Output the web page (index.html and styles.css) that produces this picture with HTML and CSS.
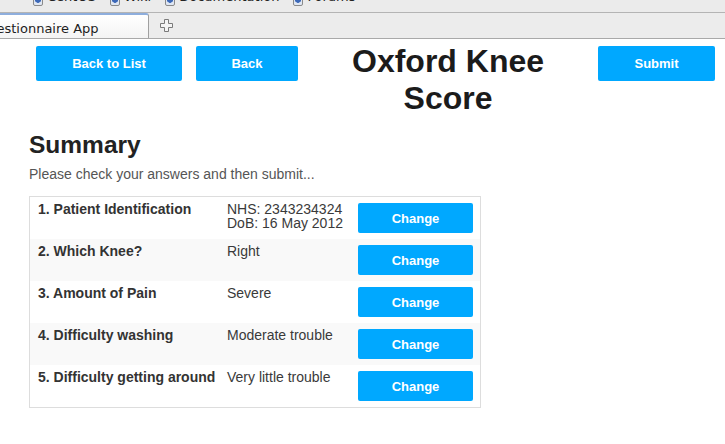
FILE: index.html
```html
<!DOCTYPE html>
<html lang="en">
<head>
<meta charset="utf-8">
<title>Questionnaire App</title>
<link rel="stylesheet" href="styles.css">
</head>
<body>
<div class="chrome">
  <nav class="bookmarks">
    <span class="bm bm-first">Most Visited</span>
    <span class="bm"><span class="bm-icon"></span>CentOS</span>
    <span class="bm"><span class="bm-icon"></span>Wiki</span>
    <span class="bm"><span class="bm-icon"></span>Documentation</span>
    <span class="bm"><span class="bm-icon"></span>Forums</span>
  </nav>
  <div class="tabs">
    <div class="tab"><span class="tab-title">Questionnaire App</span></div>
    <div class="newtab">
      <svg width="13" height="13" viewBox="0 0 13 13"><path d="M4.5 0.5h4v4h4v4h-4v4h-4v-4h-4v-4h4z" fill="#f4f4f4" stroke="#7a7a7a" stroke-width="1"/></svg>
    </div>
  </div>
</div>

<main class="page">
  <header class="topbar">
    <button class="btn btn-list">Back to List</button>
    <button class="btn btn-back">Back</button>
    <h1 class="title">Oxford Knee Score</h1>
    <button class="btn btn-submit">Submit</button>
  </header>

  <section class="summary">
    <h2 class="summary-title">Summary</h2>
    <p class="summary-sub">Please check your answers and then submit...</p>

    <div class="answers">
      <div class="row">
        <div class="cell label">1. Patient Identification</div>
        <div class="cell value">NHS: 2343234324<br>DoB: 16 May 2012</div>
        <div class="cell action"><button class="btn btn-change">Change</button></div>
      </div>
      <div class="row">
        <div class="cell label">2. Which Knee?</div>
        <div class="cell value">Right</div>
        <div class="cell action"><button class="btn btn-change">Change</button></div>
      </div>
      <div class="row">
        <div class="cell label">3. Amount of Pain</div>
        <div class="cell value">Severe</div>
        <div class="cell action"><button class="btn btn-change">Change</button></div>
      </div>
      <div class="row">
        <div class="cell label">4. Difficulty washing</div>
        <div class="cell value">Moderate trouble</div>
        <div class="cell action"><button class="btn btn-change">Change</button></div>
      </div>
      <div class="row">
        <div class="cell label">5. Difficulty getting around</div>
        <div class="cell value">Very little trouble</div>
        <div class="cell action"><button class="btn btn-change">Change</button></div>
      </div>
    </div>
  </section>
</main>
</body>
</html>
```

FILE: styles.css
```css
* { box-sizing: border-box; }

html, body {
  margin: 0;
  padding: 0;
  background: #ffffff;
  overflow: hidden;
}

body {
  font-family: "Liberation Sans", Arial, sans-serif;
  color: #333;
  width: 725px;
  height: 444px;
}

/* ---------- browser chrome ---------- */
.chrome {
  font-family: "DejaVu Sans", sans-serif;
}

.bookmarks {
  height: 13px;
  background: #ebebeb;
  border-bottom: 1px solid #b4b4b4;
  overflow: hidden;
  display: flex;
  align-items: flex-start;
  font-size: 13px;
  color: #222;
  white-space: nowrap;
}

.bm {
  display: flex;
  align-items: flex-end;
  line-height: 15px;
  margin-top: -11px;
  flex: 0 0 auto;
}

.bm-first {
  margin-left: -82px;
  width: 115px;
}

.bm + .bm { margin-left: 14px; }
.bm-first + .bm { margin-left: 0; }

.bm-icon {
  width: 10px;
  height: 12px;
  border: 1px solid #8a8a8a;
  border-radius: 2px;
  background: radial-gradient(circle at 50% 45%, #3c68b8 0 3px, #dfe6f2 3.5px);
  margin-right: 4px;
  margin-bottom: -2px;
}

.tabs {
  height: 26px;
  background: #ececec;
  border-bottom: 1px solid #a9a9a9;
  display: flex;
  align-items: stretch;
}

.tab {
  width: 149px;
  background: linear-gradient(#ffffff, #f4f4f4);
  border-top: 2px solid #8eaedd;
  border-right: 1px solid #a0a0a0;
  border-top-right-radius: 3px;
  overflow: hidden;
  font-size: 13px;
  color: #1e1e1e;
  white-space: nowrap;
  padding-top: 6px;
}

.tab-title {
  display: block;
  margin-left: -22px;
}

.newtab {
  display: flex;
  align-items: center;
  padding-left: 11px;
}

/* ---------- page ---------- */
.topbar {
  display: flex;
  align-items: flex-start;
  padding: 1px 10px 0 36px;
  height: 80px;
}

.btn {
  font-family: "Liberation Sans", Arial, sans-serif;
  font-weight: bold;
  font-size: 13px;
  color: #ffffff;
  background: #00a8ff;
  border: 0;
  border-radius: 2px;
  padding: 0;
  cursor: pointer;
}

.btn-list, .btn-back, .btn-submit {
  height: 35px;
  margin-top: 6px;
}

.btn-list { width: 146px; margin-right: 14px; }
.btn-back { width: 102px; }
.btn-submit { width: 117px; }

.title {
  width: 300px;
  margin: 3px 0 0;
  padding: 0 40px;
  text-align: center;
  font-size: 32px;
  line-height: 37px;
  font-weight: bold;
  color: #1b1b1b;
}

.summary {
  padding: 12px 0 0 29px;
}

.summary-title {
  margin: 0;
  font-size: 24.5px;
  line-height: 28px;
  font-weight: bold;
  color: #222;
}

.summary-sub {
  margin: 5px 0 0;
  font-size: 14px;
  line-height: 20px;
  color: #555;
}

.answers {
  margin-top: 12px;
  width: 452px;
  border: 1px solid #dddddd;
}

.row {
  display: grid;
  grid-template-columns: 189px 131px 130px;
}

.row:nth-child(even) { background: #f9f9f9; }

.cell {
  padding: 5px 8px;
  font-size: 14px;
  line-height: 14px;
}

.label {
  font-weight: bold;
  color: #333;
  white-space: nowrap;
}

.value {
  color: #3a3a3a;
  white-space: nowrap;
}

.action { padding: 6px 7px 6px 8px; }

.btn-change {
  display: block;
  width: 115px;
  height: 30px;
}
```
